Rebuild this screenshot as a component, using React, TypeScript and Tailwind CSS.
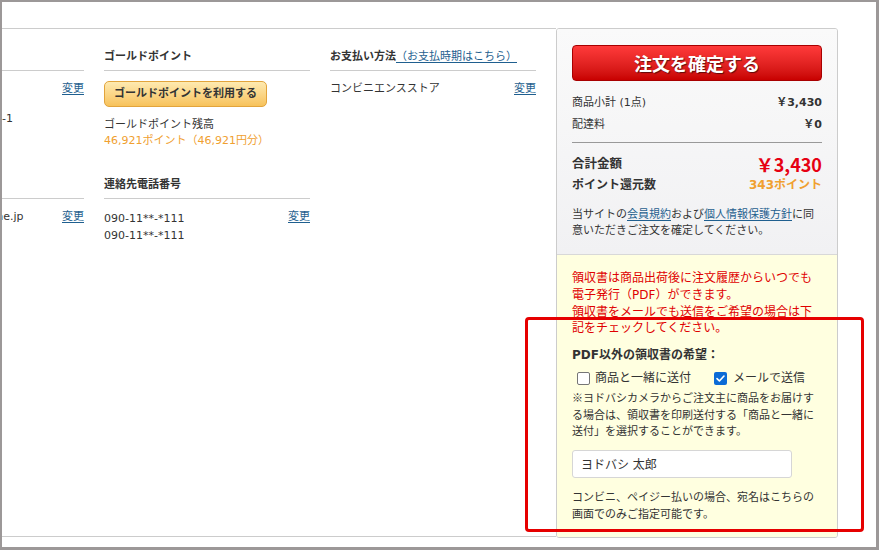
import React from "react";

const linkCls = "text-[#1f5f8f] underline underline-offset-2";

function SectionHead({ children }: { children: React.ReactNode }) {
    return (
        <div className="border-b border-[#cccccc] pb-[4px] text-[11px] leading-[18px] font-bold text-[#333]">
            {children}
        </div>
    );
}

function Checkbox({ checked }: { checked?: boolean }) {
    if (checked) {
        return (
            <span className="flex h-[13px] w-[13px] items-center justify-center rounded-[2px] bg-[#0b6bd6]">
                <svg viewBox="0 0 12 12" className="h-[11px] w-[11px]">
                    <path d="M2.2 6.2 L4.8 8.7 L9.8 3.3" fill="none" stroke="#fff" strokeWidth="1.8" strokeLinecap="round" strokeLinejoin="round" />
                </svg>
            </span>
        );
    }
    return <span className="h-[13px] w-[13px] rounded-[2px] border border-[#767676] bg-white" />;
}

export default function App() {
    return (
        <div className="relative h-[550px] w-[879px] overflow-hidden border-t-2 border-l-2 border-r-[3px] border-b-[3px] border-[#9c9898] bg-white font-['DejaVu_Sans','Noto_Sans_CJK_JP',sans-serif] text-[#333]">
            <div className="flex pt-[26px]">
                {/* left columns */}
                <div className="h-[509px] w-[554px] shrink-0 overflow-hidden border-y border-[#cccccc]">
                    <div className="ml-[-124px] flex gap-5 pt-[19px]">
                        {/* col 1 (cut off) */}
                        <div className="w-[206px] shrink-0 text-[11px]">
                            <SectionHead>お届け先</SectionHead>
                            <div className="mt-[9px] flex items-start justify-between leading-[18px]">
                                <span>ヨドバシ 太郎 様</span>
                                <a className={linkCls}>変更</a>
                            </div>
                            <div className="leading-[14px]">〒160-0023</div>
                            <div className="leading-[14px]">東京都新宿区西新宿11-1-1</div>
                            <div className="mt-[50px]">
                                <SectionHead>メールアドレス</SectionHead>
                            </div>
                            <div className="mt-[9px] flex items-start justify-between leading-[18px]">
                                <span>yodobashi@example.ne.jp</span>
                                <a className={linkCls}>変更</a>
                            </div>
                        </div>

                        {/* col 2 */}
                        <div className="w-[206px] shrink-0 text-[11px]">
                            <SectionHead>ゴールドポイント</SectionHead>
                            <button
                                type="button"
                                className="mt-[10px] h-[26px] w-[163px] rounded-[5px] border border-[#e2a43c] bg-gradient-to-b from-[#feeab0] to-[#f7c25a] text-[11px] font-bold text-[#333]"
                            >
                                ゴールドポイントを利用する
                            </button>
                            <div className="mt-[10px] leading-[16px]">
                                <div>ゴールドポイント残高</div>
                                <div className="text-[#f0a030]">46,921ポイント（46,921円分）</div>
                            </div>
                            <div className="mt-[27px]">
                                <SectionHead>連絡先電話番号</SectionHead>
                            </div>
                            <div className="mt-[9px] flex items-start justify-between">
                                <div className="pt-[2px] leading-[17px]">
                                    <div>090-11**-*111</div>
                                    <div>090-11**-*111</div>
                                </div>
                                <a className={`${linkCls} leading-[18px]`}>変更</a>
                            </div>
                        </div>

                        {/* col 3 */}
                        <div className="w-[206px] shrink-0 text-[11px]">
                            <SectionHead>
                                お支払い方法
                                <a className={`${linkCls} font-normal`}>（お支払時期はこちら）</a>
                            </SectionHead>
                            <div className="mt-[9px] flex items-start justify-between leading-[18px]">
                                <span>コンビニエンスストア</span>
                                <a className={linkCls}>変更</a>
                            </div>
                        </div>
                    </div>
                </div>

                {/* right panel */}
                <div className="flex h-[510px] w-[282px] shrink-0 flex-col overflow-hidden rounded-[3px] border border-[#cccccc]">
                    <div className="border-b border-[#d8d8d8] bg-gradient-to-b from-[#fafafa] to-[#f1f1f3] px-[15px] pt-[16px] pb-[15px]">
                        <button
                            type="button"
                            className="h-[36px] w-full rounded-[4px] border border-[#a80000] bg-gradient-to-b from-[#ff3a3a] to-[#c80000] font-['Noto_Sans_CJK_JP',sans-serif] text-[18px] font-bold text-white [text-shadow:1px_1px_1px_rgba(0,0,0,0.55)]"
                        >
                            注文を確定する
                        </button>
                        <div className="mt-[11px] border-b border-[#999] pb-[6px] text-[11px]">
                            <div className="flex justify-between leading-[22px]">
                                <span>商品小計 (1点)</span>
                                <span className="font-bold">￥3,430</span>
                            </div>
                            <div className="flex justify-between leading-[22px]">
                                <span>配達料</span>
                                <span className="font-bold">￥0</span>
                            </div>
                        </div>
                        <div className="mt-[10px] flex h-[22px] items-center justify-between">
                            <span className="text-[12.5px] font-bold">合計金額</span>
                            <span className="font-['Noto_Sans_CJK_JP',sans-serif] text-[18px] font-bold text-[#e60012]">￥3,430</span>
                        </div>
                        <div className="flex h-[20px] items-center justify-between">
                            <span className="text-[12px] font-bold">ポイント還元数</span>
                            <span className="text-[12px] font-bold text-[#f0a030]">343ポイント</span>
                        </div>
                        <p className="mt-[12px] text-[11px] leading-[16px]">
                            当サイトの<a className={linkCls}>会員規約</a>および<a className={linkCls}>個人情報保護方針</a>に同意いただきご注文を確定してください。
                        </p>
                    </div>

                    <div className="flex-1 bg-[#ffffe0] px-[15px] pt-[15px]">
                        <p className="text-[12px] leading-[16.8px] text-[#e00000]">
                            領収書は商品出荷後に注文履歴からいつでも電子発行（PDF）ができます。
                            <br />
                            領収書をメールでも送信をご希望の場合は下記をチェックしてください。
                        </p>
                        <div className="mt-[9px] text-[12px] leading-[18px] font-bold">PDF以外の領収書の希望：</div>
                        <div className="mt-[5px] flex items-center text-[12px] leading-[18px]">
                            <label className="flex items-center gap-[5px] pl-[5px]">
                                <Checkbox />
                                <span>商品と一緒に送付</span>
                            </label>
                            <label className="ml-[23px] flex items-center gap-[6px]">
                                <Checkbox checked />
                                <span>メールで送信</span>
                            </label>
                        </div>
                        <p className="mt-[2px] text-[11px] leading-[16.5px]">
                            <span className="font-['Noto_Sans_CJK_JP',sans-serif]">※</span>ヨドバシカメラからご注文主に商品をお届けする場合は、領収書を印刷送付する「商品と一緒に送付」を選択することができます。
                        </p>
                        <input
                            readOnly
                            value="ヨドバシ 太郎"
                            className="mt-[9px] h-[28px] w-[220px] rounded-[3px] border border-[#d6d6d6] bg-white px-[8px] text-[12px] text-[#333] outline-none"
                        />
                        <p className="mt-[11px] text-[11px] leading-[17px]">
                            コンビニ、ペイジー払いの場合、宛名はこちらの画面でのみご指定可能です。
                        </p>
                    </div>
                </div>
            </div>

            {/* highlight box */}
            <div className="pointer-events-none absolute left-[523px] top-[315px] h-[215px] w-[339px] rounded-[4px] border-[3px] border-[#e60000]" />
        </div>
    );
}
